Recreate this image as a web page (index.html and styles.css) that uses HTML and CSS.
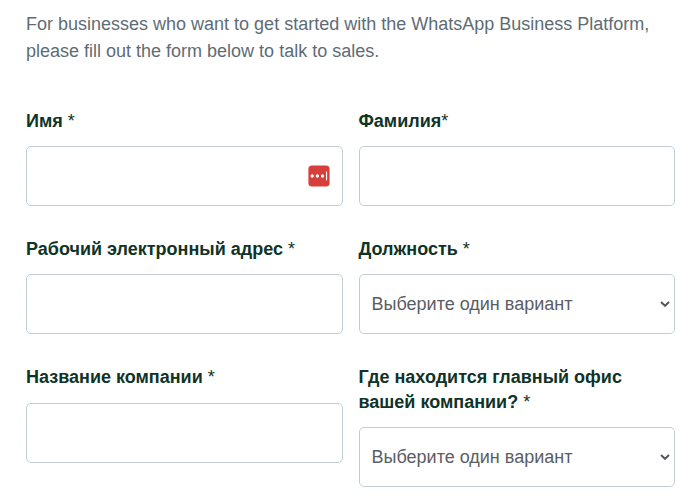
FILE: index.html
```html
<!DOCTYPE html>
<html lang="ru">
<head>
<meta charset="utf-8">
<title>WhatsApp Business Platform</title>
<link rel="stylesheet" href="styles.css">
</head>
<body>
<main class="page">
  <p class="intro">For businesses who want to get started with the WhatsApp Business Platform, please fill out the form below to talk to sales.</p>
  <form class="form">
    <div class="field">
      <label class="label" for="first">Имя <span class="star">*</span></label>
      <div class="control">
        <input class="box" id="first" type="text">
        <svg class="badge" viewBox="0 0 22 22" aria-hidden="true">
          <rect x="0.4" y="0.4" width="21.2" height="21.2" rx="3.6" fill="#d73f3a"/>
          <g fill="#fff"><circle cx="4.2" cy="11" r="1.65"/><circle cx="9.4" cy="11" r="1.65"/><circle cx="14.5" cy="11" r="1.65"/><rect x="18" y="6.6" width="1.1" height="8.8"/></g>
        </svg>
      </div>
    </div>
    <div class="field">
      <label class="label" for="last">Фамилия<span class="star">*</span></label>
      <input class="box" id="last" type="text">
    </div>
    <div class="field">
      <label class="label" for="email">Рабочий электронный адрес <span class="star">*</span></label>
      <input class="box" id="email" type="text">
    </div>
    <div class="field">
      <label class="label" for="job">Должность <span class="star">*</span></label>
      <div class="control">
        <select class="box select" id="job"><option>Выберите один вариант</option></select>
        <svg class="chevron" viewBox="0 0 10 6" aria-hidden="true"><path d="M1 1l4 3.8L9 1" fill="none" stroke="#55565e" stroke-width="2"/></svg>
      </div>
    </div>
    <div class="field">
      <label class="label" for="company">Название компании <span class="star">*</span></label>
      <input class="box" id="company" type="text">
    </div>
    <div class="field">
      <label class="label" for="office">Где находится главный офис вашей компании? <span class="star">*</span></label>
      <div class="control">
        <select class="box select" id="office"><option>Выберите один вариант</option></select>
        <svg class="chevron" viewBox="0 0 10 6" aria-hidden="true"><path d="M1 1l4 3.8L9 1" fill="none" stroke="#55565e" stroke-width="2"/></svg>
      </div>
    </div>
  </form>
</main>
</body>
</html>
```
FILE: styles.css
```css
* {
  box-sizing: border-box;
}

body {
  margin: 0;
  background: #fff;
  font-family: "Liberation Sans", Arial, sans-serif;
  overflow: hidden;
}

.page {
  width: 649px;
  margin-left: 26px;
  padding-top: 11px;
}

.intro {
  margin: 0;
  font-size: 18px;
  line-height: 27px;
  color: #5e6c75;
}

.form {
  display: grid;
  grid-template-columns: 1fr 1fr;
  column-gap: 16px;
  row-gap: 31px;
  align-items: start;
  margin-top: 43.8px;
}

.label {
  display: block;
  margin-bottom: 13px;
  font-size: 18px;
  font-weight: 700;
  line-height: 24.3px;
  color: #0f3327;
}

.star {
  font-weight: 400;
}

.control {
  position: relative;
}

.box {
  display: block;
  width: 100%;
  height: 60px;
  margin: 0;
  padding: 0 12px;
  border: 1px solid #c2ced3;
  border-radius: 5px;
  background: #fff;
  font-family: inherit;
  font-size: 18px;
  color: #5b5d64;
}

.select {
  appearance: none;
}

.badge {
  position: absolute;
  top: 19px;
  right: 12.5px;
  width: 22px;
  height: 22px;
}

.chevron {
  position: absolute;
  top: 27px;
  right: 5px;
  width: 10px;
  height: 6px;
  pointer-events: none;
}
```
